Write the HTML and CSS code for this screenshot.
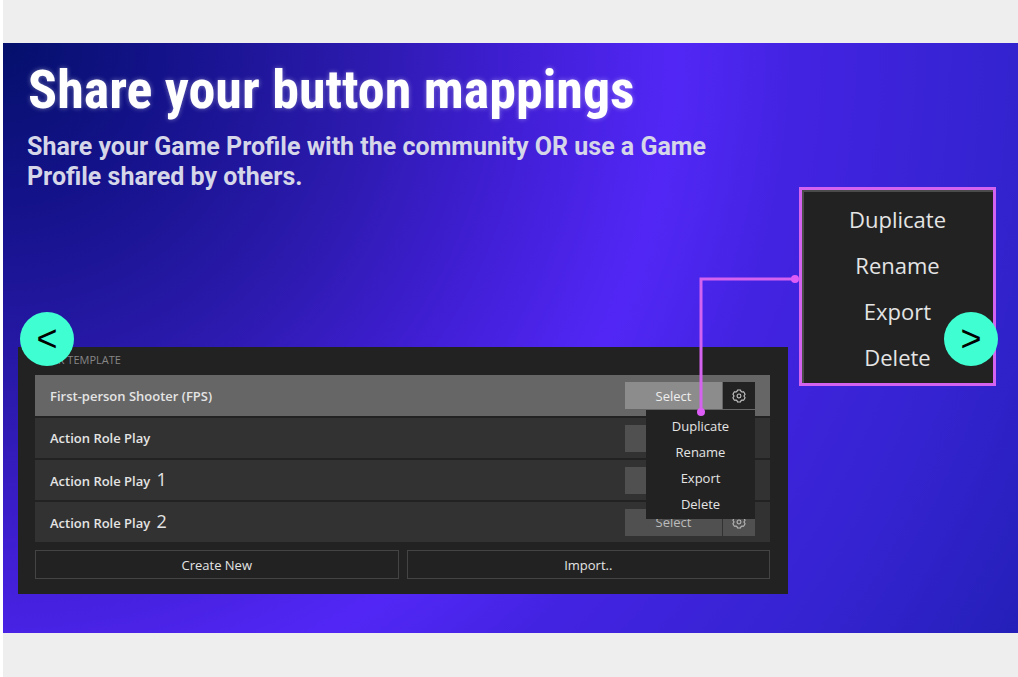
FILE: index.html
```
<!DOCTYPE html>
<html lang="en">
<head>
<meta charset="utf-8">
<title>Share your button mappings</title>
<link rel="stylesheet" href="styles.css">
</head>
<body>
<svg class="defs" aria-hidden="true">
  <symbol id="gear" viewBox="0 0 16 16">
    <path d="M6.3 1.1h3.4l.7 1.7 1 .6 1.9-.3L15 6l-1.200 1.500v1L15 10l-1.700 2.900-1.900-.3-1 .6-.7 1.700H6.300l-.7-1.700-1-.6-1.900.3L1 10l1.200-1.500v-1L1 6l1.700-2.900 1.900.3 1-.6z" fill="none" stroke="currentColor" stroke-width="1.2" stroke-linejoin="round"/>
    <circle cx="8" cy="8" r="2.200" fill="none" stroke="currentColor" stroke-width="1.2"/>
  </symbol>
</svg>
<main class="slide">
  <section class="main">
    <h1 class="title">Share your button mappings</h1>
    <p class="lead">Share your Game Profile with the community OR use a Game Profile shared by others.</p>
    <div class="panel">
      <h2 class="panel-title">YOUR TEMPLATE</h2>
      <ul class="rows">
        <li class="row active">
          <span class="name">First-person Shooter (FPS)</span>
          <button class="select">Select</button>
          <button class="cog" aria-label="Options"><svg class="icon"><use href="#gear"/></svg></button>
          <div class="menu">
            <button class="item">Duplicate</button>
            <button class="item">Rename</button>
            <button class="item">Export</button>
            <button class="item">Delete</button>
          </div>
        </li>
        <li class="row">
          <span class="name">Action Role Play</span>
          <button class="select" aria-label="Select"></button>
          <button class="cog" aria-label="Options"></button>
        </li>
        <li class="row">
          <span class="name">Action Role Play <span class="num">1</span></span>
          <button class="select" aria-label="Select"></button>
          <button class="cog" aria-label="Options"></button>
        </li>
        <li class="row">
          <span class="name">Action Role Play <span class="num">2</span></span>
          <button class="select">Select</button>
          <button class="cog" aria-label="Options"><svg class="icon"><use href="#gear"/></svg></button>
        </li>
      </ul>
      <div class="actions">
        <button class="action">Create New</button>
        <button class="action">Import..</button>
      </div>
    </div>
  </section>
  <aside class="callout">
    <svg class="connector" viewBox="0 0 100 144" aria-hidden="true">
      <path d="M98 5H4V138" fill="none" stroke="#d463f0" stroke-width="3"/>
      <circle cx="98" cy="5" r="4" fill="#dc5cf5"/>
      <circle cx="4" cy="138" r="4" fill="#dc5cf5"/>
    </svg>
    <button class="big-item">Duplicate</button>
    <button class="big-item">Rename</button>
    <button class="big-item">Export</button>
    <button class="big-item">Delete</button>
  </aside>
  <button class="arrow prev">&lt;</button>
  <button class="arrow next">&gt;</button>
</main>
</body>
</html>
```

FILE: styles.css
```
* { box-sizing: border-box; }
body {
  margin: 0;
  min-height: 100vh;
  display: flex;
  flex-direction: column;
  justify-content: center;
  padding-bottom: 1px;
  background: #eee;
  border-left: 3px solid #fff;
  font-family: "Open Sans", "Noto Sans", sans-serif;
  color: #e4e4e4;
}
button {
  border: 0;
  padding: 0;
  background: none;
  color: inherit;
  font: inherit;
}
.defs { position: absolute; width: 0; height: 0; }
.slide {
  position: relative;
  display: grid;
  grid-template-columns: minmax(0, 770fr) minmax(0, 197fr);
  column-gap: 11px;
  align-items: start;
  padding: 17px 22px 39px 15px;
  background: radial-gradient(circle at 0 0, #04106b 0, #14128a 160px, #2c1aae 360px, #421fd8 530px, #5227f6 670px, #4323e2 790px, #3423d0 1000px, #241fb8 1180px);
}
.title {
  margin: 0 0 0 10px;
  font: bold 54px/60px "Roboto Condensed", "Liberation Sans Narrow", "Liberation Sans", sans-serif;
  color: #fff;
  text-shadow: 0 0 5px rgba(255, 255, 255, .4);
}
.lead {
  margin: 12px 60px 0 9px;
  font: bold 25px/30px Roboto, sans-serif;
  color: #d5d6e8;
}
.panel {
  margin-top: 155px;
  padding: 4px 18px 15px 17px;
  background: #222;
}
.panel-title {
  margin: 0 0 6px;
  font-size: 11px;
  line-height: 18px;
  font-weight: 400;
  color: #868686;
}
.rows {
  display: grid;
  gap: 2px;
  margin: 0;
  padding: 0;
  list-style: none;
}
.row {
  position: relative;
  display: flex;
  align-items: center;
  gap: 1px;
  height: 40px;
  padding: 0 15px;
  background: #323232;
}
.row.active { height: 41px; background: #666; }
.name {
  flex: 1;
  font-size: 13px;
  line-height: 20px;
  font-weight: 600;
}
.num {
  margin-left: 3px;
  font-size: 18px;
  font-weight: 400;
}
.select {
  width: 97px;
  height: 27px;
  background: #505050;
  font-size: 13px;
  color: #bbb;
}
.cog {
  display: grid;
  place-items: center;
  width: 32px;
  height: 27px;
  background: #505050;
  color: #bbb;
}
.active .select { background: #8c8c8c; color: #eee; }
.active .cog { background: #222; color: #ccc; }
.icon { width: 14px; height: 14px; }
.menu {
  position: absolute;
  z-index: 1;
  top: 35px;
  right: 15px;
  display: grid;
  width: 109px;
  padding: 3px 0 2px;
  background: #222;
}
.item { font-size: 13px; line-height: 26px; }
.actions {
  display: grid;
  grid-template-columns: 1fr 1fr;
  gap: 8px;
  margin-top: 8px;
}
.action {
  height: 29px;
  border: 1px solid #444;
  font-size: 13px;
}
.callout {
  position: relative;
  z-index: 2;
  display: grid;
  margin-top: 127px;
  padding: 6px 0 3px;
  border: 3px solid #d463f0;
  background: #222;
  box-shadow: inset 2px 2px 0 #4b4b4b;
}
.big-item { font-size: 22px; line-height: 46px; }
.connector {
  position: absolute;
  top: 84px;
  right: 100%;
  width: 100px;
  height: 144px;
  margin-right: 5px;
  overflow: visible;
}
.arrow {
  position: absolute;
  z-index: 3;
  top: calc(50% - 26px);
  width: 54px;
  height: 54px;
  border-radius: 50%;
  background: #3fffd2;
  color: #000;
  font: 36px/50px "Liberation Sans", sans-serif;
}
.prev { left: 17px; }
.next { right: 20px; }
```
